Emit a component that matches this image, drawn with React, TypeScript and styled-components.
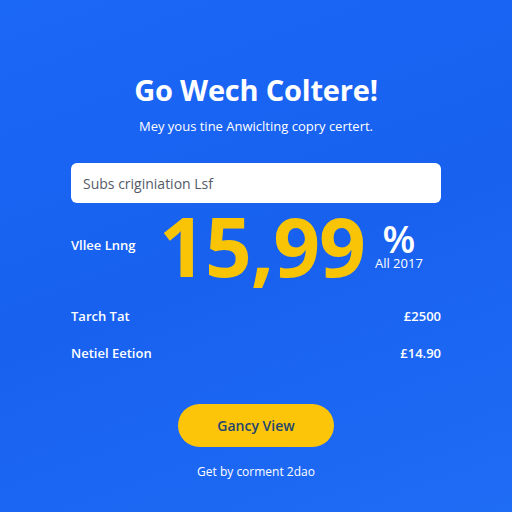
import styled, { createGlobalStyle } from 'styled-components';

const Global = createGlobalStyle`
    html, body {
        margin: 0;
        padding: 0;
    }
    body {
        font-family: "Open Sans", "Noto Sans", sans-serif;
    }
`

interface Line {
    label: string,
    amount: string
}

const lines: Line[] = [
    {label: 'Tarch Tat', amount: '£2500'},
    {label: 'Netiel Eetion', amount: '£14.90'},
]

const App = () => {
    return (
        <Page>
            <Global />
            <Title>Go Wech Coltere!</Title>
            <Subtitle>Mey yous tine Anwiclting copry certert.</Subtitle>
            <Field defaultValue="Subs criginiation Lsf" />
            <PriceRow>
                <PriceLabel>Vllee Lnng</PriceLabel>
                <Price>15,99</Price>
                <PriceSide>
                    <Percent>%</Percent>
                    <Year>All 2017</Year>
                </PriceSide>
            </PriceRow>
            <Lines>
                {lines.map(({label, amount}) => (
                    <LineRow key={label}>
                        <span>{label}</span>
                        <span>{amount}</span>
                    </LineRow>
                ))}
            </Lines>
            <Action>Gancy View</Action>
            <Footer>Get by corment 2dao</Footer>
        </Page>
    )
}

const Page = styled.div`
    width: 512px;
    height: 512px;
    box-sizing: border-box;
    padding: 72px 71px 0;
    background: linear-gradient(160deg, #1b67f6 0%, #1861ef 50%, #1f6cf5 100%);
    display: flex;
    flex-direction: column;
    align-items: center;
    color: #fff;
    overflow: hidden;
`

const Title = styled.h1`
    margin: 0;
    font-size: 29px;
    font-weight: 700;
    line-height: 36px;
    letter-spacing: -0.2px;
`

const Subtitle = styled.p`
    margin: 9px 0 0;
    font-size: 13px;
    line-height: 18px;
`

const Field = styled.input`
    margin-top: 28px;
    width: 370px;
    height: 40px;
    box-sizing: border-box;
    border: none;
    border-radius: 6px;
    padding: 0 12px;
    font-family: "Open Sans", "Noto Sans", sans-serif;
    font-size: 14px;
    color: #555a66;
    background: #fff;
    outline: none;
`

const PriceRow = styled.div`
    margin-top: 7px;
    width: 370px;
    height: 70px;
    display: flex;
    align-items: center;
`

const PriceLabel = styled.div`
    width: 88px;
    font-size: 13px;
    font-weight: 600;
`

const Price = styled.div`
    font-size: 82px;
    font-weight: 700;
    line-height: 70px;
    color: #f9c406;
    letter-spacing: -1px;
`

const PriceSide = styled.div`
    align-self: flex-start;
    padding-top: 13px;
    margin-left: 10px;
    display: flex;
    flex-direction: column;
    align-items: center;
`

const Percent = styled.div`
    font-size: 38px;
    font-weight: 600;
    line-height: 30px;
`

const Year = styled.div`
    margin-top: 3px;
    font-size: 13px;
    line-height: 14px;
`

const Lines = styled.div`
    margin-top: 27px;
    width: 370px;
    display: flex;
    flex-direction: column;
    gap: 19px;
`

const LineRow = styled.div`
    display: flex;
    justify-content: space-between;
    font-size: 13px;
    font-weight: 600;
    line-height: 18px;
`

const Action = styled.button`
    margin-top: 42px;
    width: 156px;
    height: 43px;
    border: none;
    border-radius: 22px;
    background: #fcc50a;
    color: #23456e;
    font-family: "Open Sans", "Noto Sans", sans-serif;
    font-size: 14px;
    font-weight: 600;
`

const Footer = styled.div`
    margin-top: 16px;
    font-size: 12px;
    line-height: 17px;
`

export default App;
